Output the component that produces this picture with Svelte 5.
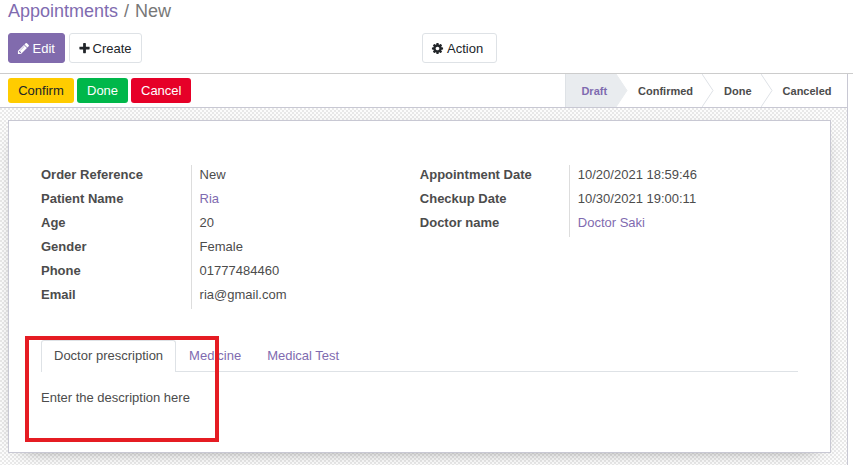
<script>
  const left = [
    ['Order Reference', 'New'],
    ['Patient Name', 'Ria', true],
    ['Age', '20'],
    ['Gender', 'Female'],
    ['Phone', '01777484460'],
    ['Email', 'ria@gmail.com']
  ];
  const right = [
    ['Appointment Date', '10/20/2021 18:59:46'],
    ['Checkup Date', '10/30/2021 19:00:11'],
    ['Doctor name', 'Doctor Saki', true]
  ];
  const steps = ['Draft', 'Confirmed', 'Done', 'Canceled'];
  const tabs = ['Doctor prescription', 'Medicine', 'Medical Test'];
  const icons = {
    pencil: 'M491 1536l91-91-235-235-91 91v107h128v128h107zm523-928q0-22-22-22-10 0-17 7l-542 542q-7 7-7 17 0 22 22 22 10 0 17-7l542-542q7-7 7-17zm-54-192l416 416-832 832h-416v-416zm683 96q0 53-37 90l-166 166-416-416 166-165q36-38 90-38 53 0 91 38l235 234q37 39 37 91z',
    plus: 'M1600 736v192q0 40-28 68t-68 28h-416v416q0 40-28 68t-68 28h-192q-40 0-68-28t-28-68v-416h-416q-40 0-68-28t-28-68v-192q0-40 28-68t68-28h416v-416q0-40 28-68t68-28h192q40 0 68 28t28 68v416h416q40 0 68 28t28 68z',
    cog: 'M1152 896q0-106-75-181t-181-75-181 75-75 181 75 181 181 75 181-75 75-181zm512-109v222q0 12-8 23t-20 13l-185 28q-19 54-39 91 35 50 107 138 10 12 10 25t-9 23q-27 37-99 108t-94 71q-12 0-26-9l-138-108q-44 23-91 38-16 136-29 186-7 28-36 28h-222q-14 0-24.500-8.500t-11.500-21.500l-28-184q-49-16-90-37l-141 107q-10 9-25 9-14 0-25-11-126-114-165-168-7-10-7-23 0-12 8-23 15-21 51-66.500t54-70.500q-27-50-41-99l-183-27q-13-2-21-12.500t-8-23.500v-222q0-12 8-23t19-13l186-28q14-46 39-92-40-57-107-138-10-12-10-24 0-10 9-23 26-36 98.500-107.500t94.500-71.500q13 0 26 10l138 107q44-23 91-38 16-136 29-186 7-28 36-28h222q14 0 24.500 8.500t11.500 21.500l28 184q49 16 90 37l142-107q9-9 24-9 13 0 25 10 129 119 165 170 7 8 7 22 0 12-8 23-15 21-51 66.500t-54 70.500q26 50 41 98l183 28q13 2 21 12.500t8 23.500z'
  };
</script>

{#snippet icon(name)}
  <svg class="icon" viewBox="0 0 1792 1792" aria-hidden="true"><path d={icons[name]} /></svg>
{/snippet}

{#snippet group(rows)}
  <dl class="group">
    {#each rows as [label, value, link]}
      <div class="field">
        <dt>{label}</dt>
        <dd class:link>{value}</dd>
      </div>
    {/each}
  </dl>
{/snippet}

<div class="app">
  <header class="panel">
    <nav class="crumbs"><span class="link">Appointments</span><span class="sep">/</span><span>New</span></nav>
    <div class="toolbar">
      <div class="main-actions">
        <button class="btn primary">{@render icon('pencil')}Edit</button>
        <button class="btn create">{@render icon('plus')}Create</button>
      </div>
      <button class="btn action">{@render icon('cog')}Action</button>
    </div>
  </header>

  <main class="view">
    <div class="statusbar">
      <div class="state-actions">
        <button class="state confirm">Confirm</button>
        <button class="state done">Done</button>
        <button class="state cancel">Cancel</button>
      </div>
      <ol class="steps">
        {#each steps as step, i}
          <li class:current={i === 0}>
            <span>{step}</span>
            {#if i < steps.length - 1}
              <svg class="arrow" viewBox="0 0 12 33" aria-hidden="true"><path d="M0 0L11 16.500L0 33" /></svg>
            {/if}
          </li>
        {/each}
      </ol>
    </div>

    <section class="sheet">
      <div class="groups">
        {@render group(left)}
        {@render group(right)}
      </div>
      <div class="notebook">
        <div class="tabs">
          {#each tabs as tab, i}
            <span class="tab" class:active={i === 0}>{tab}</span>
          {/each}
        </div>
        <p>Enter the description here</p>
        <div class="highlight"></div>
      </div>
    </section>
  </main>
</div>

<style>
  .app {
    width: 853px;
    height: 465px;
    overflow: hidden;
    display: flex;
    flex-direction: column;
    box-sizing: border-box;
    background: #fff;
    color: #4c4c4c;
    font: 13px/19.500px "Liberation Sans", Arial, sans-serif;
  }
  .app * { box-sizing: border-box; }
  .link { color: #7f6bb0; }
  .panel {
    height: 74px;
    flex: none;
    border-bottom: 1px solid #ccc;
    padding-left: 8px;
  }
  .crumbs {
    height: 33px;
    font-size: 18px;
    line-height: 23px;
    color: #777;
  }
  .sep { padding: 0 6px; }
  .toolbar { display: flex; }
  .main-actions { width: 414px; display: flex; gap: 4px; }
  .btn {
    display: flex;
    align-items: center;
    gap: 3px;
    height: 30px;
    padding: 1px 9px 0 8px;
    border: 1px solid #dee2e6;
    border-radius: 3px;
    background: #fff;
    color: #212529;
    font: inherit;
    line-height: 20px;
  }
  .primary { width: 57px; gap: 2.500px; background: #816bad; border-color: #816bad; color: #fff; }
  .create { width: 73px; gap: 1.500px; }
  .action { width: 75px; }
  .icon { width: 13px; height: 13px; flex: none; fill: currentColor; }
  .view {
    width: 848px;
    flex: 1;
    border-right: 1px solid #c8c8d3;
    background: repeating-conic-gradient(#e9e9e9 0 25%, #fdfdfd 0 50%) 0 0 / 4px 4px;
  }
  .statusbar {
    height: 34px;
    padding-left: 8px;
    display: flex;
    justify-content: space-between;
    border-bottom: 1px solid #c8c8d3;
    background: #fff;
  }
  .state-actions { display: flex; gap: 3px; padding-top: 4px; }
  .state {
    height: 25px;
    padding: 0 10px;
    border: 0;
    border-radius: 3px;
    font: inherit;
    color: #fff;
  }
  .confirm { width: 66px; background: #ffcc00; color: #212529; }
  .done { width: 51px; background: #00b74a; }
  .cancel { width: 60px; background: #e60028; }
  .steps {
    display: flex;
    margin: 0;
    padding: 0;
    list-style: none;
    border-left: 1px solid #dee2e6;
    font-size: 11px;
    font-weight: bold;
    line-height: 34px;
  }
  .steps li { position: relative; padding: 0 9px 0 22px; }
  .steps li:first-child { padding-left: 15px; padding-right: 9px; }
  .steps li:last-child { padding-right: 15.500px; }
  .steps .current { background: #e9ecef; color: #7f6bb0; }
  .arrow {
    position: absolute;
    z-index: 1;
    left: 100%;
    top: 0;
    width: 12px;
    height: 33px;
    fill: #fff;
    stroke: #dee2e6;
  }
  .current .arrow { fill: #e9ecef; stroke: #e9ecef; }
  .sheet {
    width: 823px;
    height: 333px;
    margin: 12px 0 0 8px;
    padding: 44px 32px 0;
    background: #fff;
    border: 1px solid #c8c8d3;
    box-shadow: 0 5px 20px -15px #000;
  }
  .groups { display: flex; height: 175px; align-items: flex-start; }
  .group { width: 379px; margin: 0; }
  .group + .group { padding-left: 0.300px; }
  .field { display: flex; height: 24px; }
  dt { width: 149.600px; font-weight: bold; }
  .group + .group dt { width: 149px; }
  dd { margin: 0; padding-left: 8px; border-left: 1px solid #ddd; }
  .notebook { position: relative; }
  .tabs {
    display: flex;
    height: 32px;
    border-bottom: 1px solid #dee2e6;
  }
  .tab { padding: 6px 13px; color: #7f6bb0; }
  .tab.active {
    height: 32px;
    padding: 5px 12px;
    border: 1px solid #dee2e6;
    border-bottom: 0;
    border-radius: 3px 3px 0 0;
    background: #fff;
    color: #4c4c4c;
  }
  p { margin: 16px 0 0; }
  .highlight {
    position: absolute;
    left: -16px;
    top: -4px;
    width: 194px;
    height: 106px;
    border: 4px solid #e51c23;
  }
</style>
